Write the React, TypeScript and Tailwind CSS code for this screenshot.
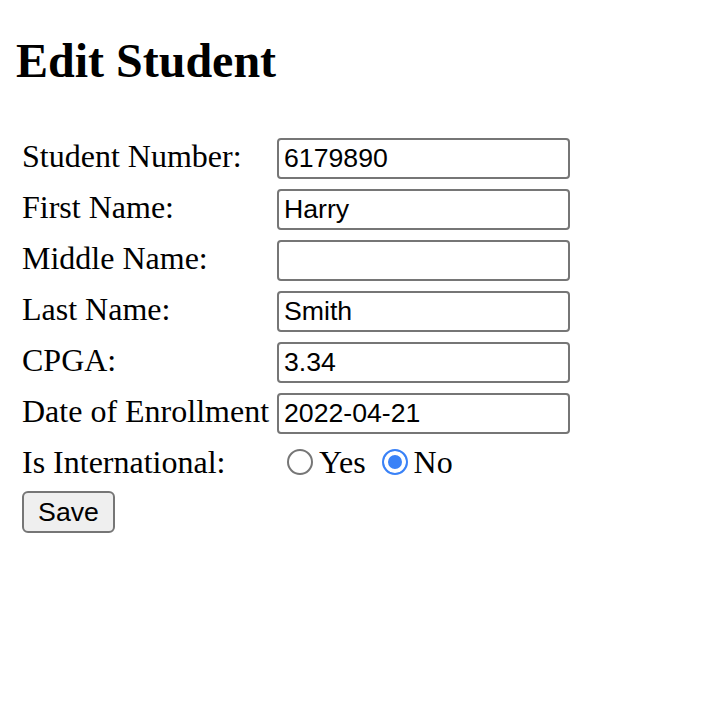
import { useState } from "react";

const inputCls =
  "h-[41px] w-[293px] px-[5px] border-2 border-[#767676] rounded-[4px] bg-white text-black text-[26.67px] leading-[normal] font-['Liberation_Sans',Arial,sans-serif] align-baseline outline-none";

const radioCls =
  "appearance-none w-[26px] h-[26px] mt-[3px] mr-[6px] rounded-full border-2 border-[#767676] bg-white align-[-2px] checked:border-[#3a82f7] checked:bg-[#3a82f7] checked:shadow-[inset_0_0_0_4px_white]";

const fields = [
  { label: "Student Number:", name: "studentNumber", value: "6179890" },
  { label: "First Name:", name: "firstName", value: "Harry" },
  { label: "Middle Name:", name: "middleName", value: "" },
  { label: "Last Name:", name: "lastName", value: "Smith" },
  { label: "CPGA:", name: "cpga", value: "3.34" },
  { label: "Date of Enrollment", name: "enrollment", value: "2022-04-21" },
];

const App = () => {
  const [international, setInternational] = useState(false);

  return (
    <div className="px-4 pt-[33px] font-['Liberation_Serif','Times_New_Roman',serif] text-black bg-white min-h-screen">
      <h1 className="text-[48px] leading-[55px] font-bold">Edit Student</h1>

      <form onSubmit={(e) => e.preventDefault()}>
        <table className="mt-[44px] border-separate border-spacing-[4px] text-[32px] leading-[normal]">
          <tbody className="align-baseline">
            {fields.map((f) => (
              <tr key={f.name} className="h-[47px]">
                <td className="p-[2px] whitespace-nowrap">{f.label}</td>
                <td className="p-[2px]">
                  <input type="text" name={f.name} defaultValue={f.value} className={inputCls} />
                </td>
              </tr>
            ))}
            {/* Is International */}
            <tr className="h-[43px]">
              <td className="p-[2px] whitespace-nowrap">Is International:</td>
              <td className="p-[2px] whitespace-nowrap">
                <input
                  type="radio"
                  name="international"
                  checked={international}
                  onChange={() => setInternational(true)}
                  className={radioCls + " ml-[10px]"}
                />
                Yes{" "}
                <input
                  type="radio"
                  name="international"
                  checked={!international}
                  onChange={() => setInternational(false)}
                  className={radioCls + " ml-[8px]"}
                />
                No
              </td>
            </tr>
            <tr>
              <td className="p-[2px]">
                <button
                  type="submit"
                  className="w-[93px] h-[42px] bg-[#efefef] border-2 border-[#767676] rounded-[6px] text-[26.67px] leading-[normal] font-['Liberation_Sans',Arial,sans-serif] text-black"
                >
                  Save
                </button>
              </td>
              <td />
            </tr>
          </tbody>
        </table>
      </form>
    </div>
  );
};

export default App;
